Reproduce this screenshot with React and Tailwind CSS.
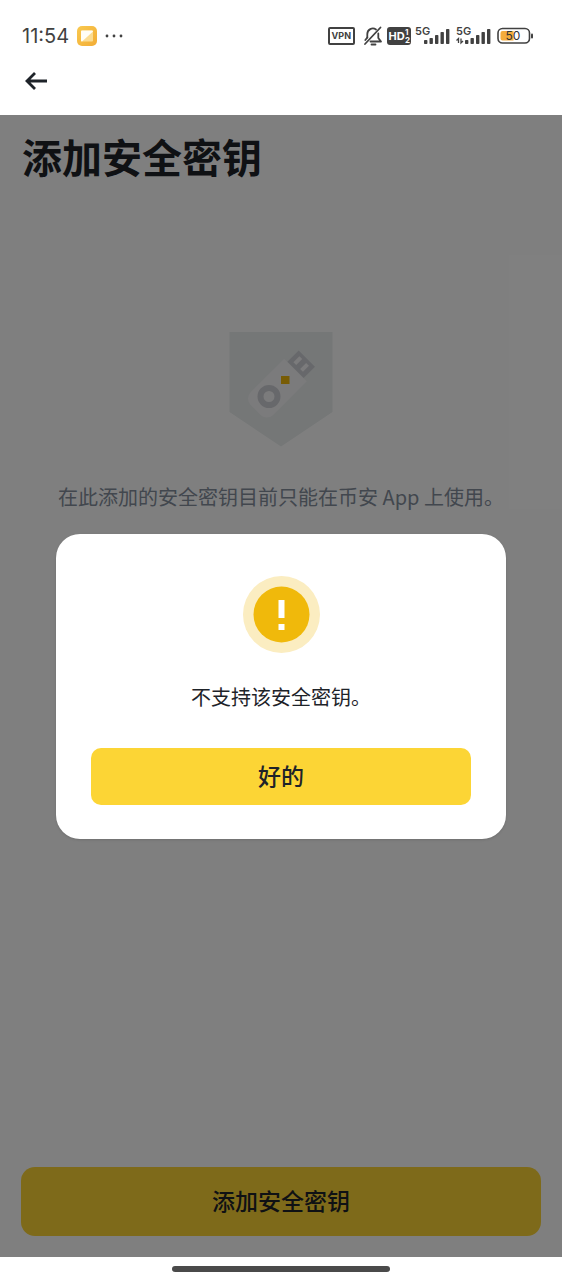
import { useState } from "react";

const signalBars = [
  { x: 9, h: 4 },
  { x: 14.5, h: 6 },
  { x: 20, h: 9 },
  { x: 25.5, h: 12 },
  { x: 31, h: 15 },
];

function Signal({ data }) {
  return (
    <svg width="37" height="26" viewBox="0 0 37 26" fill="#414141">
      <text x="0" y="12" className="font-['Inter'] text-[11px] font-semibold">
        5G
      </text>
      {signalBars.map((bar) => (
        <rect key={bar.x} x={bar.x} y={21 - bar.h} width="3.4" height={bar.h} rx="0.8" />
      ))}
      {data && (
        <path d="M2.5 20v-4.5L.5 17.5M5 15.5V20l2-2" stroke="#414141" strokeWidth="1.3" fill="none" />
      )}
    </svg>
  );
}

function BellOff() {
  return (
    <svg width="20" height="22" viewBox="0 0 20 22" fill="none" stroke="#414141" strokeWidth="1.8" strokeLinecap="round" strokeLinejoin="round">
      <path d="M4.3 12.5V9A5.5 5.5 0 0 1 13 4.5M15.3 8.5V13l2.7 3.5H7.5" />
      <path d="M4.3 12.5L2.3 15" />
      <path d="M17.5 2.5L2 19" />
      <path d="M8.5 19.5h4" />
    </svg>
  );
}

function Battery() {
  return (
    <svg width="37" height="18" viewBox="0 0 37 18">
      <rect x="1" y="1.5" width="31.5" height="14.5" rx="4.5" fill="none" stroke="#414141" strokeWidth="1.6" />
      <path d="M5.5 4h11v9.5h-11a2 2 0 0 1-2-2V6a2 2 0 0 1 2-2z" fill="#f5ac3c" />
      <rect x="34" y="6.5" width="2" height="5" rx="1" fill="#414141" />
      <text x="16" y="13" textAnchor="middle" fill="#333333" className="font-['Inter'] text-[12px]">
        50
      </text>
    </svg>
  );
}

function StatusBar() {
  return (
    <div className="flex h-6 items-center justify-between pr-7 pl-[22px] text-[#414141]">
      <div className="flex items-center gap-2">
        <span className="font-['Inter',sans-serif] text-[20px] leading-6">11:54</span>
        <svg width="20" height="20" viewBox="0 0 20 20">
          <defs>
            <linearGradient id="appIcon" x1="0" y1="0" x2="1" y2="1">
              <stop offset="0" stopColor="#f9c94f" />
              <stop offset="1" stopColor="#f2ac35" />
            </linearGradient>
          </defs>
          <rect width="20" height="20" rx="5" fill="url(#appIcon)" />
          <rect x="4" y="4.5" width="12" height="11" rx="1" fill="#fbdc92" />
          <path d="M5 4.5h10a1 1 0 0 1 1 1l-11 10a1 1 0 0 1-1-1v-9a1 1 0 0 1 1-1z" fill="#fffdf7" />
        </svg>
        <svg width="18" height="4" viewBox="0 0 18 4" fill="#414141">
          <circle cx="2" cy="2" r="1.4" />
          <circle cx="9" cy="2" r="1.4" />
          <circle cx="16" cy="2" r="1.4" />
        </svg>
      </div>

      <div className="flex items-center gap-1">
        <span className="rounded-xs border-2 border-[#414141] px-[2px] font-['Inter',sans-serif] text-[9px] leading-[14px] font-bold">
          VPN
        </span>
        <span className="pl-1">
          <BellOff />
        </span>
        <svg width="24" height="18" viewBox="0 0 24 18">
          <rect width="24" height="18" rx="3" fill="#414141" />
          <g fill="#ffffff" className="font-['Inter'] font-bold">
            <text x="1.5" y="13" className="text-[11px]">HD</text>
            <text x="18" y="8" className="text-[8px]">1</text>
            <text x="18" y="16" className="text-[8px]">2</text>
          </g>
        </svg>
        <Signal />
        <Signal data />
        <Battery />
      </div>
    </div>
  );
}

function SecurityKeyArt() {
  return (
    <svg className="mx-auto mt-[152px]" width="104" height="115" viewBox="0 0 104 115">
      <path d="M.5 0h103v80L52 114.5.5 80z" fill="#eaeeee" />
      <g transform="translate(40 64.5) rotate(45)">
        <path d="M-16-37.5h32V10a9 9 0 0 1-9 9H-7a9 9 0 0 1-9-9z" fill="#f6f6f8" />
        <rect x="-11.5" y="-53.5" width="23" height="16" fill="#cfd0d6" />
        <rect x="-7" y="-50" width="4" height="8.5" fill="#f6f6f8" />
        <rect x="2.5" y="-50" width="4" height="8.5" fill="#f6f6f8" />
      </g>
      <circle cx="40" cy="64.5" r="8.5" fill="none" stroke="#cfd0d6" strokeWidth="6" />
      <rect x="52" y="44" width="8.5" height="8" fill="#f0b90b" />
    </svg>
  );
}

function UnsupportedDialog({ onClose }) {
  return (
    <div className="absolute inset-0 flex items-center bg-black/50 px-14">
      <div
        role="alertdialog"
        aria-labelledby="dialog-message"
        className="flex w-full flex-col items-center rounded-3xl bg-white px-[35px] pt-[42px] pb-[34px] shadow-sm"
      >
        <svg width="77" height="77" viewBox="0 0 77 77">
          <circle cx="38.5" cy="38.5" r="38.5" fill="#fbedc1" />
          <circle cx="38.5" cy="38.5" r="28" fill="#f0b90b" />
          <path d="M35.5 24h6v18h-6zM35.5 48h6v6h-6z" fill="#ffffff" />
        </svg>
        <p id="dialog-message" className="mt-[30px] text-[20px] leading-7 text-[#1e2329]">
          不支持该安全密钥。
        </p>
        <button
          type="button"
          onClick={onClose}
          className="mt-[37px] h-[57px] w-full rounded-[10px] bg-[#fcd535] pb-[3px] text-[23px] leading-7 font-medium text-[#1e2329]"
        >
          好的
        </button>
      </div>
    </div>
  );
}

export default function App() {
  const [dialogOpen, setDialogOpen] = useState(true);

  return (
    <div className="flex min-h-screen flex-col bg-white font-['Noto_Sans_CJK_SC',sans-serif] text-[#1e2329]">
      {/* Status bar and back button */}
      <header className="pt-6 pb-[22px]">
        <StatusBar />
        <button type="button" aria-label="返回" className="mt-5 ml-6 block">
          <svg width="24" height="25" viewBox="0 0 24 25" fill="none" stroke="#1e2329" strokeWidth="2.8">
            <path d="M23 13H3M11 5L3 13l8 8" />
          </svg>
        </button>
      </header>

      <main className="relative flex flex-1 flex-col">
        <h1 className="px-[22px] pt-[17px] text-[40px] leading-[48px] font-bold">添加安全密钥</h1>
        <SecurityKeyArt />
        <p className="mt-9 px-6 text-center text-[20px] leading-7 text-[#848e9c]">
          在此添加的安全密钥目前只能在币安 App 上使用。
        </p>
        <div className="mt-auto px-[21px] pb-[21px]">
          <button
            type="button"
            onClick={() => setDialogOpen(true)}
            className="h-[69px] w-full rounded-[14px] bg-[#fcd535] pb-[3px] text-[23px] leading-7 font-medium"
          >
            添加安全密钥
          </button>
        </div>
        {dialogOpen && <UnsupportedDialog onClose={() => setDialogOpen(false)} />}
      </main>

      {/* Gesture bar */}
      <footer className="flex h-[23px] items-center justify-center">
        <div className="h-[6px] w-[218px] rounded-full bg-[#4a4a4a]" />
      </footer>
    </div>
  );
}
